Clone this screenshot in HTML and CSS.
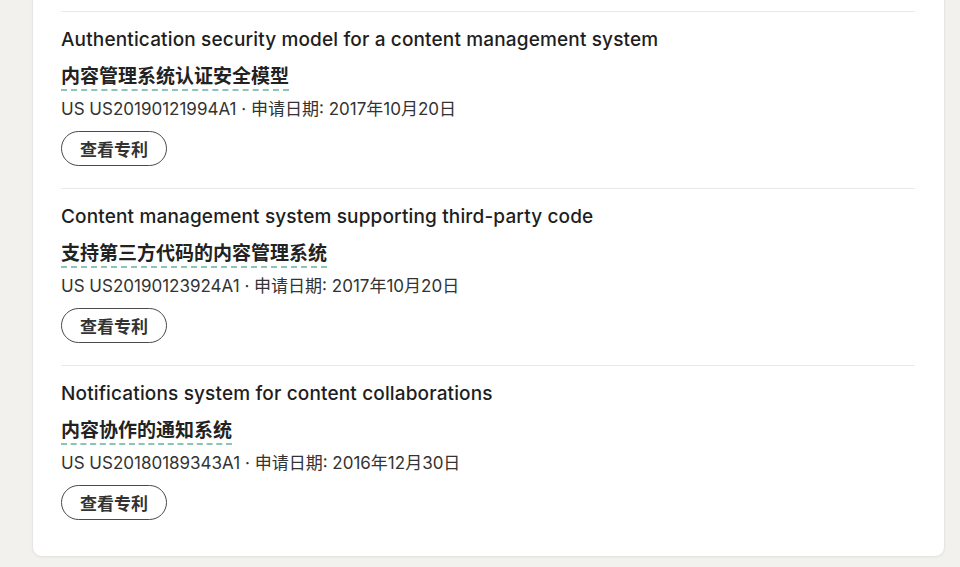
FILE: index.html
```html
<!DOCTYPE html>
<html>

<head>
    <meta charset="utf-8">
    <link rel="stylesheet" href="styles.css">
</head>

<body>
    <div class="page">
        <div class="card">
            <div class="patent">
                <div class="patent-title">Authentication security model for a content management system</div>
                <div class="patent-cn"><span>内容管理系统认证安全模型</span></div>
                <div class="patent-meta">US US20190121994A1 · 申请日期: 2017年10月20日</div>
                <button class="view-btn">查看专利</button>
            </div>
            <div class="patent">
                <div class="patent-title">Content management system supporting third-party code</div>
                <div class="patent-cn"><span>支持第三方代码的内容管理系统</span></div>
                <div class="patent-meta">US US20190123924A1 · 申请日期: 2017年10月20日</div>
                <button class="view-btn">查看专利</button>
            </div>
            <div class="patent">
                <div class="patent-title">Notifications system for content collaborations</div>
                <div class="patent-cn"><span>内容协作的通知系统</span></div>
                <div class="patent-meta">US US20180189343A1 · 申请日期: 2016年12月30日</div>
                <button class="view-btn">查看专利</button>
            </div>
        </div>
    </div>
</body>

</html>
```

FILE: styles.css
```css
body {
    margin: 0;
    background-color: #f2f1ed;
    font-family: Inter, "Noto Sans", "Noto Sans CJK SC", sans-serif;
    color: #222;
}

.page {
    height: 567px;
    overflow: hidden;
    padding: 0 15px 0 32px;
}

.card {
    margin-top: -21px;
    padding: 31px 29px 14px 28px;
    background-color: #fff;
    border: 1px solid #e6e5e1;
    border-radius: 10px;
    box-shadow: 0 1px 2px rgba(0, 0, 0, 0.04);
}

.patent {
    border-top: 1px solid #e9e8e5;
    padding: 15px 0 22px;
}

.patent-title {
    font-size: 19px;
    font-weight: 500;
    line-height: 26px;
    letter-spacing: 0.15px;
    color: #1e1e1e;
}

.patent-cn {
    margin-top: 8px;
    font-family: "Noto Sans CJK SC", sans-serif;
    font-size: 19px;
    font-weight: 700;
    line-height: 28px;
    color: #222;
}

.patent-cn span {
    display: inline-block;
    border-bottom: 2px dashed #8cc4b8;
}

.patent-meta {
    margin-top: 7px;
    font-size: 17px;
    line-height: 22px;
    color: #333;
}

.view-btn {
    margin-top: 11px;
    height: 35px;
    padding: 0 18px;
    border: 1.5px solid #4a4a4a;
    border-radius: 18px;
    background: #fff;
    font-family: "Noto Sans CJK SC", sans-serif;
    font-size: 17px;
    font-weight: 700;
    color: #333;
    cursor: pointer;
}
```
